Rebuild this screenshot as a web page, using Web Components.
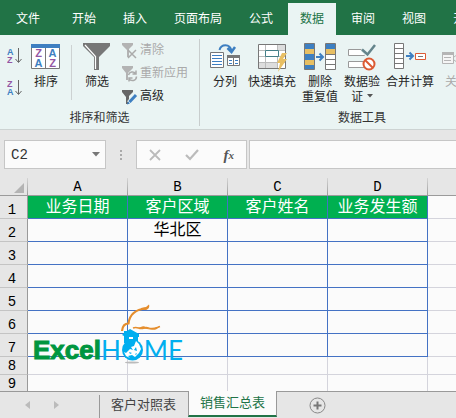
<!DOCTYPE html>
<html lang="zh-CN">
<head>
<meta charset="utf-8">
<title>销售汇总表</title>
<style>
html, body { margin: 0; height: 100%; }
body { font: 12px/15px "Liberation Sans", "Noto Sans CJK SC", sans-serif; color: #262626; background: #e6e6e6; overflow: hidden; }
</style>
</head>
<body>
<excel-window></excel-window>

<template id="t-window">
<style>
:host { display: flex; flex-direction: column; height: 100vh; overflow: hidden; }
sheet-grid { flex: 1; min-height: 0; }
ribbon-bar { display: flex; overflow: hidden; background: #eaf4f3; padding: 4px 0 3px; border-bottom: 1px solid #cdd3d2; }
.pair { display: flex; flex-direction: column; gap: 15px; padding: 8px 9px 0 7px; }
.rule { width: 1px; height: 55px; margin: 6px 11px 0 10px; background: #cdd2d2; }
.stack { display: flex; flex-direction: column; padding-left: 11px; }
.tools { display: flex; gap: 6px; padding-left: 8px; }
</style>
<ribbon-tabs></ribbon-tabs>
<ribbon-bar>
  <ribbon-group label="排序和筛选" style="--w:200px">
    <div class="pair">
      <icon-button label="升序"><svg width="15" height="17" viewBox="0 0 15 17"><g font-family="Liberation Sans" font-weight="bold" font-size="9"><text x="0" y="8" fill="#3e7fc1">A</text><text x="0" y="16" fill="#9356a3">Z</text></g><path d="M11.500 1v14M8.500 12l3 3.500 3-3.500" fill="none" stroke="#666"/></svg></icon-button>
      <icon-button label="降序"><svg width="15" height="17" viewBox="0 0 15 17"><g font-family="Liberation Sans" font-weight="bold" font-size="9"><text x="0" y="8" fill="#9356a3">Z</text><text x="0" y="16" fill="#3e7fc1">A</text></g><path d="M11.500 1v14M8.500 12l3 3.500 3-3.500" fill="none" stroke="#666"/></svg></icon-button>
    </div>
    <tool-button style="--w:30px"><svg width="30" height="28" viewBox="0 0 30 28"><path d="M.5 2.500h28v23H.5z" fill="#fff" stroke="#777"/><path d="M0 1h29v4H0z" fill="#3e7fc1"/><path d="M14.500 5v20" stroke="#777"/><g font-family="Liberation Sans" font-weight="bold" font-size="11" text-anchor="middle"><text x="7.500" y="14" fill="#9356a3">Z</text><text x="7.500" y="24" fill="#3e7fc1">A</text><text x="21.500" y="14" fill="#3e7fc1">A</text><text x="21.500" y="24" fill="#9356a3">Z</text></g></svg><span slot="label">排序</span></tool-button>
    <div class="rule"></div>
    <tool-button style="--w:28px"><svg width="28" height="28" viewBox="0 0 28 28"><path d="M0 0h27v3L16 14v13h-5V14L0 3z" fill="#777"/><path d="M2 2l10.500 11.500V26" fill="none" stroke="#fff" stroke-width="1.200"/></svg><span slot="label">筛选</span></tool-button>
    <div class="stack">
      <small-button off><svg width="16" height="16" viewBox="0 0 16 16"><path d="M0 0h11v2L7 6v8H5V7L0 2z" fill="#b3b3b3"/><path d="M6 7l8 8M14 7l-8 8" stroke="#aaa" stroke-width="1.500"/></svg><span slot="label">清除</span></small-button>
      <small-button off><svg width="16" height="16" viewBox="0 0 16 16"><path d="M0 0h11v2L8 5 6 7v7H4V7L0 2z" fill="#b3b3b3"/><path d="M6.500 9a4 4 0 0 1 7-1.500M14.500 10.500a4 4 0 0 1-7.500 2M14 4.500V8h-3.500M7 15.500V12h3.500" fill="none" stroke="#aaa" stroke-width="1.500"/></svg><span slot="label">重新应用</span></small-button>
      <small-button><svg width="16" height="16" viewBox="0 0 16 16"><path d="M0 1h11v2L7 7v8H4V8L0 3z" fill="#666"/><path d="M7 14l7-8" stroke="#eaf4f3" stroke-width="5"/><path d="M7.500 13l6.500-7" stroke="#3e7fc1" stroke-width="3"/><path d="M5 15.500l1-3 2 2z" fill="#3e7fc1"/></svg><span slot="label">高级</span></small-button>
    </div>
  </ribbon-group>
  <ribbon-group label="数据工具" style="--w:325px">
    <div class="tools">
      <tool-button style="--w:34px"><svg width="32" height="28" viewBox="0 0 32 28"><path d="M1.500 9.500h13v15h-13z" fill="#fff" stroke="#777"/><path d="M3 12.500h10M3 15.500h10M3 18.500h10M3 21.500h10" stroke="#3e7fc1"/><path d="M18.500 12.500h12v10h-12z" fill="#fff" stroke="#777"/><path d="M18 12h13v3H18z" fill="#777"/><path d="M24.500 14v9" stroke="#777"/><path d="M20 17.500h3M20 20.500h3M26 17.500h3M26 20.500h3" stroke="#3e7fc1"/><path d="M10.500 7C12 1 21 0 22.500 8" fill="none" stroke="#3e7fc1" stroke-width="2"/><path d="M18.500 5l4 4 3.500-5" fill="none" stroke="#3e7fc1" stroke-width="2.500"/></svg><span slot="label">分列</span></tool-button>
      <tool-button style="--w:48px"><svg width="30" height="30" viewBox="0 0 30 30"><path d="M1.500 1.500h27v24h-27z" fill="#fff" stroke="#777"/><path d="M2 20h18v5H2zM21 2h7v5h-7z" fill="#ddd"/><path d="M2 7.500h26M2 13.500h26M2 19.500h26M8.500 2v23M20.500 2v23" stroke="#bbb"/><path d="M8.500 7.500h13v6h-13z" fill="#fff" stroke="#457f88"/><path d="M25 10h5l-4 6h4l-9 13 2-9h-3z" fill="#e8bf63"/></svg><span slot="label">快速填充</span></tool-button>
      <tool-button style="--w:36px"><svg width="34" height="28" viewBox="0 0 34 28"><path d="M1.500.5h10v26h-10z" fill="#3e7fc1" stroke="#777"/><path d="M2 6h9v5H2zM2 17h9v5H2z" fill="#e8bf63"/><path d="M22.500.5h10v26h-10z" fill="#fff" stroke="#777"/><path d="M23 1h9v5h-9z" fill="#3e7fc1"/><path d="M23 6h9v5h-9z" fill="#e8bf63"/><path d="M22 11.500h10M22 16.500h10M22 21.500h10" stroke="#777"/><path d="M13 14h6M16.500 10.500L20 14l-3.500 3.500" fill="none" stroke="#3e7fc1" stroke-width="2"/></svg><span slot="label">删除<br>重复值</span></tool-button>
      <tool-button style="--w:36px"><svg width="28" height="28" viewBox="0 0 28 28"><path d="M.5 6.500h16v6H.5zM.5 18.500h16v6H.5z" fill="#fff" stroke="#999"/><path d="M14 6l5.500 5.500L27 1.500" fill="none" stroke="#eaf4f3" stroke-width="5"/><path d="M14 6.500l5.500 5L27 2" fill="none" stroke="#64848b" stroke-width="2.500"/><circle cx="21" cy="21" r="5.500" fill="#fff" stroke="#dc5b34" stroke-width="2"/><path d="M17 17l8 8" stroke="#dc5b34" stroke-width="2"/></svg><span slot="label">数据验<br>证 <svg width="6" height="4" viewBox="0 0 6 4" style="vertical-align:3px"><path d="M0 0h6L3 3.500z" fill="#555"/></svg></span></tool-button>
      <tool-button style="--w:48px"><svg width="34" height="28" viewBox="0 0 34 28"><path d="M1.500.5h9v25h-9z" fill="#fff" stroke="#777"/><path d="M2 5.500h9M2 10.500h9M2 15.500h9M2 20.500h9" stroke="#777"/><path d="M13 13h6M16.500 9.500L20 13l-3.500 3.500" fill="none" stroke="#3e7fc1" stroke-width="2"/><path d="M22.500 10.500h10v6h-10z" fill="#fff" stroke="#dc5b34"/><path d="M25 13.500h5" stroke="#777"/></svg><span slot="label">合并计算</span></tool-button>
      <tool-button off style="--w:34px"><svg width="30" height="28" viewBox="0 0 30 28"><path d="M.5 9.500h11v11H.5z" fill="#f5f5f5" stroke="#b5b5b5"/><path d="M0 9h12v3H0z" fill="#b5b5b5"/><path d="M2 14.500h7M2 17.500h7M12 14l4-3M12 17l4 3" stroke="#b5b5b5"/></svg><span slot="label">关系</span></tool-button>
    </div>
  </ribbon-group>
</ribbon-bar>
<formula-bar></formula-bar>
<sheet-grid><brand-logo></brand-logo></sheet-grid>
<sheet-tabs></sheet-tabs>
</template>

<template id="t-tabs">
<style>
:host { display: block; flex: none; background: #217346; overflow: hidden; }
nav { display: flex; gap: 3px; height: 32px; padding: 3px 0 0 4px; }
button { flex: none; font: inherit; color: #fff; border: 0; background: none; padding: 0 12px; }
button:first-child { margin-right: 5px; }
button[aria-selected=true] { background: #eaf4f3; color: #217346; }
</style>
<nav role="tablist"><button role="tab">文件</button><button role="tab">开始</button><button role="tab">插入</button><button role="tab">页面布局</button><button role="tab">公式</button><button role="tab" aria-selected="true">数据</button><button role="tab">审阅</button><button role="tab">视图</button><button role="tab">开发工具</button></nav>
</template>

<template id="t-group">
<style>
:host { display: block; flex: none; box-sizing: border-box; width: var(--w); border-right: 1px solid #c8cdcd; }
.body { display: flex; height: 72px; }
.name { text-align: center; color: #333; }
</style>
<div class="body"><slot></slot></div><div class="name"></div>
</template>

<template id="t-tool">
<style>
:host { display: block; flex: none; width: var(--w); }
button { font: inherit; color: inherit; border: 0; background: none; padding: 4px 0 0; width: 100%; display: flex; flex-direction: column; align-items: center; white-space: nowrap; }
:host([off]) button { color: #aaa; }
.icon { height: 32px; display: flex; align-items: flex-start; }
</style>
<button><span class="icon"><slot></slot></span><slot name="label"></slot></button>
</template>

<template id="t-small">
<style>
:host { display: block; }
button { font: inherit; color: inherit; border: 0; background: none; padding: 0; height: 23px; display: flex; align-items: center; gap: 2px; white-space: nowrap; }
:host([off]) button { color: #aaa; }
</style>
<button><slot></slot><slot name="label"></slot></button>
</template>

<template id="t-icon">
<style>
:host { display: block; }
button { display: block; border: 0; background: none; padding: 0; height: 17px; }
</style>
<button><slot></slot></button>
</template>

<template id="t-formula">
<style>
:host { display: flex; flex: none; align-items: center; padding: 10px 0 9px 4px; background: #e6e6e6; }
.box { box-sizing: border-box; height: 29px; border: 1px solid #c6c6c6; background: #fbfbfb; display: flex; align-items: center; }
.name { width: 102px; padding: 0 5px 0 6px; }
input { font: 14px/16px "Liberation Mono", monospace; color: #333; border: 0; padding: 0; background: none; min-width: 0; flex: 1; outline: 0; }
button { border: 0; background: none; padding: 0; display: flex; }
.dots { margin: 0 14px; }
.acts { width: 111px; justify-content: space-between; padding: 0 12px; margin-right: 2px; }
.fx { flex: 1; border-right: 0; }
.fn { font: italic bold 15px/16px "Liberation Serif", serif; color: #555; }
.fn small { font-size: 11px; }
</style>
<div class="box name"><input aria-label="名称框" value="C2"><button aria-label="展开名称"><svg width="8" height="5" viewBox="0 0 8 5"><path d="M0 0h8L4 4.500z" fill="#777"/></svg></button></div>
<svg class="dots" width="2" height="12" viewBox="0 0 2 12"><path d="M0 1h2v2H0zM0 5h2v2H0zM0 9h2v2H0z" fill="#aaa"/></svg>
<div class="box acts"><button aria-label="取消"><svg width="12" height="12" viewBox="0 0 12 12"><path d="M1 1l10 10M11 1L1 11" stroke="#bbb" stroke-width="1.800"/></svg></button><button aria-label="输入"><svg width="14" height="12" viewBox="0 0 14 12"><path d="M1 6l4 4 8-9" fill="none" stroke="#bbb" stroke-width="2.200"/></svg></button><button class="fn" aria-label="插入函数">f<small>x</small></button></div>
<div class="box fx"><input aria-label="编辑栏"></div>
</template>

<template id="t-grid">
<style>
:host { display: block; position: relative; overflow: hidden; background: #fbfbfb; }
table { width: 100%; table-layout: fixed; border-collapse: separate; border-spacing: 0; font: 16px/18px "Liberation Sans", "Noto Sans CJK SC", sans-serif; }
col.head { width: 28px; } col.data { width: 100px; }
th, td { box-sizing: border-box; padding: 0; height: 23px; font-weight: normal; text-align: center; border-right: 1px solid #d4d4dc; border-bottom: 1px solid #d4d4dc; white-space: nowrap; color: #000; line-height: 18px; }
thead th { height: 18px; background: #e6e6e6; border-bottom-color: #999; border-right: 1px solid; border-image: linear-gradient(#d8d8d8, #999) 1; border-width: 0 1px 1px 0; font: 14px/16px "Liberation Mono", monospace; vertical-align: bottom; }
tbody th { background: #e6e6e6; border-right-color: #999; border-bottom-color: #c4c4c4; font: 14px/16px "Liberation Mono", monospace; vertical-align: bottom; padding-right: 3px; }
tr.short > * { height: 18px; }
td.box { border-color: #4472c4; }
td.title { background: #00b050; color: #fff; }
tbody tr td:last-child, thead th:last-child { border-right: 0; }
svg { display: block; margin: 0 3px 2px auto; }
::slotted(brand-logo) { position: absolute; left: 33px; top: 126px; }
</style>
<table><colgroup><col class="head"><col class="data"><col class="data"><col class="data"><col class="data"><col></colgroup><thead><tr><th aria-label="全选"><svg width="10" height="10" viewBox="0 0 10 10"><path d="M10 0v10H0z" fill="#b4b4b4"/></svg></th><th>A</th><th>B</th><th>C</th><th>D</th><th></th></tr></thead><tbody></tbody></table>
<slot></slot>
</template>

<template id="t-logo">
<style>
:host { display: flex; align-items: flex-end; height: 60px; font: 26px/28px "Liberation Sans", sans-serif; }
b { color: #00963f; -webkit-text-stroke: 1px #00963f; }
span { color: #00aeef; font-family: Lato, sans-serif; font-weight: 400; }
svg { flex: none; overflow: visible; }
</style>
<b>Excel</b><span>H</span><svg width="23" height="60" viewBox="0 0 23 60"><ellipse cx="11" cy="58.500" rx="7" ry="1" fill="#bbb"/><g fill="none" stroke="#e58e2e" stroke-linejoin="round"><path d="M1 27C1.500 22 4 19.500 7.500 19.500 8.500 11 13 5.500 25 4.500" stroke-width="2.200"/><path d="M12 24c5-2 6 2 11 0 4-2 4 1 8 .5 3 0 5-1 8-2" stroke-width="1.500"/></g><path d="M20 4l5-1 3-2.500c1 3-1 5-3 5.500h-5zM17 24c3-1 5-3 8-1 5 3 9 1 14-1-3 5-8 4-13 3z" fill="#e58e2e"/><path d="M1 31l2-2v-2h3l3-2 9 5v3h-1v6H3v-7z" fill="#00aeef"/><circle cx="11.500" cy="46" r="10.500" fill="#00aeef"/><path d="M8 33h4v2H8z" fill="#fff"/><path d="M15 37l3 3 2 5-2 4-4 4-3-2-4 1 2 2-4-2-2-4 2 1 4-4 3 1-2-3 3-1z" fill="#fff"/><path d="M13 46l2-3 1 4zM8 48l3 1-2 1zM14 50l2-1-1 2z" fill="#00aeef"/></svg><span>ME</span>
</template>

<template id="t-sheets">
<style>
:host { display: flex; flex: none; box-sizing: border-box; height: 27px; background: #e6e6e6; box-shadow: inset 0 1px #999; align-items: stretch; }
button { font: 13px/16px "Liberation Sans", "Noto Sans CJK SC", sans-serif; border: 0; background: none; color: #444; padding: 0 0 2px; }
.nav { display: flex; align-items: center; gap: 24px; width: 74px; padding-left: 25px; }
.nav button { display: flex; padding: 0; }
.tab { padding: 0 12px 4px 11px; border-left: 1px solid #999; margin-top: 4px; }
.tab[aria-selected=true] { margin: 0 0 1px; background: #fbfbfb; color: #217346; border-right: 1px solid #999; border-bottom: 2px solid #217346; padding: 0 11px; }
.add { padding: 2px 0 0; margin-left: 32px; display: flex; align-items: center; }
</style>
<div class="nav"><button aria-label="上一个"><svg width="5" height="8" viewBox="0 0 5 8"><path d="M5 0v8L0 4z" fill="#bbb"/></svg></button><button aria-label="下一个"><svg width="5" height="8" viewBox="0 0 5 8"><path d="M0 0v8l5-4z" fill="#bbb"/></svg></button></div>
<button class="tab" role="tab">客户对照表</button><button class="tab" role="tab" aria-selected="true">销售汇总表</button>
<button class="add" aria-label="新工作表"><svg width="17" height="17" viewBox="0 0 17 17"><circle cx="8.500" cy="8.500" r="7.500" fill="none" stroke="#888"/><path d="M8.500 4.500v8M4.500 8.500h8" stroke="#777" stroke-width="2"/></svg></button>
</template>

<script>
const define = (name, id, setup) => customElements.define(name, class extends HTMLElement {
  constructor() {
    super();
    this.attachShadow({ mode: 'open' }).append(document.getElementById(id).content.cloneNode(true));
  }
  connectedCallback() { if (setup) setup(this, this.shadowRoot); }
});
define('ribbon-tabs', 't-tabs');
define('ribbon-group', 't-group', (el, root) => { root.querySelector('.name').textContent = el.getAttribute('label'); });
define('tool-button', 't-tool', (el, root) => { root.querySelector('button').disabled = el.hasAttribute('off'); });
define('small-button', 't-small', (el, root) => { root.querySelector('button').disabled = el.hasAttribute('off'); });
define('icon-button', 't-icon', (el, root) => { root.querySelector('button').setAttribute('aria-label', el.getAttribute('label')); });
define('formula-bar', 't-formula');
define('sheet-grid', 't-grid', (el, root) => {
  const data = [['业务日期', '客户区域', '客户姓名', '业务发生额'], ['', '华北区']];
  const body = root.querySelector('tbody');
  body.replaceChildren();
  for (let r = 0; r < 9; r++) {
    const row = body.insertRow();
    if (r > 6) row.className = 'short';
    const head = document.createElement('th');
    head.scope = 'row';
    head.textContent = r + 1;
    row.append(head);
    for (let c = 0; c < 5; c++) {
      const cell = row.insertCell();
      cell.textContent = data[r]?.[c] ?? '';
      if (c < 4 && r < 7) cell.classList.add('box');
      if (c < 4 && r === 0) cell.classList.add('title');
    }
  }
});
define('brand-logo', 't-logo');
define('sheet-tabs', 't-sheets');
customElements.define('ribbon-bar', class extends HTMLElement {
  constructor() {
    super();
    this.attachShadow({ mode: 'open' }).innerHTML = '<style>:host { display: flex; flex: none; }</style><slot></slot>';
  }
});
define('excel-window', 't-window');
</script>
</body>
</html>
